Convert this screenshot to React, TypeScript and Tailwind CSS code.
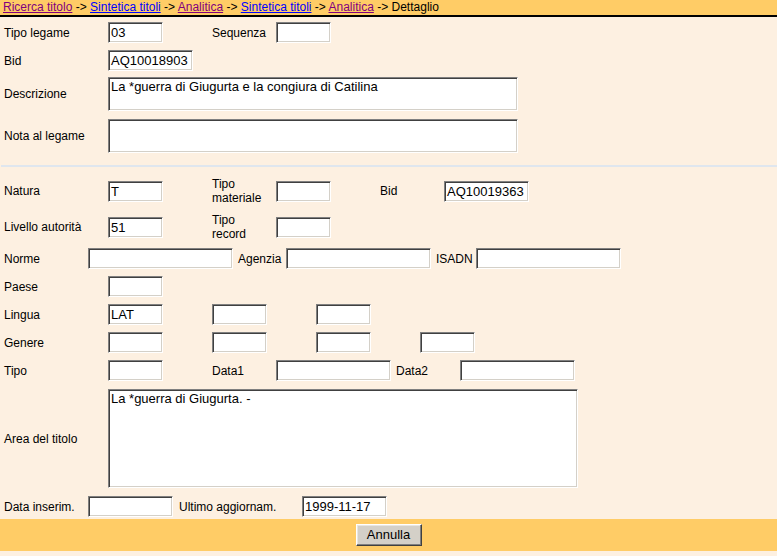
import React from 'react'

const inset =
  'border border-t-[#808080] border-l-[#808080] border-b-white border-r-white shadow-[inset_1px_1px_0_#404040,inset_-1px_-1px_0_#d4d0c8] bg-white'

function Field({ w, value = '' }: { w: string; value?: string }) {
  return (
    <div className={`${inset} ${w} h-[21px] shrink-0 pl-[2px] text-[13px] leading-[19px] text-black`}>
      {value}
    </div>
  )
}

function Area({ w, h, value = '' }: { w: string; h: string; value?: string }) {
  return (
    <div className={`${inset} ${w} ${h} shrink-0 pl-[2px] pt-[1px] text-[13px] leading-[16px] text-black`}>
      {value}
    </div>
  )
}

function Label({ w, children }: { w: string; children: React.ReactNode }) {
  return <div className={`${w} shrink-0 text-[12px] leading-[14px] text-black`}>{children}</div>
}

function Crumb({ children, visited }: { children: React.ReactNode; visited?: boolean }) {
  return (
    <span className={visited ? 'text-[#800080] underline' : 'text-[#0000ff] underline'}>{children}</span>
  )
}

export default function App() {
  return (
    <div
      className="flex h-[556px] w-[777px] flex-col bg-[#fdf0e1]"
      style={{ fontFamily: '"Liberation Sans", Arial, sans-serif' }}
    >
      {/* Breadcrumb */}
      <div className="h-[17px] border-b-2 border-black bg-[#ffcc66] pl-[3px] text-[12px] leading-[15px] text-black">
        <Crumb visited>Ricerca titolo</Crumb> -&gt; <Crumb>Sintetica titoli</Crumb> -&gt;{' '}
        <Crumb visited>Analitica</Crumb> -&gt; <Crumb>Sintetica titoli</Crumb> -&gt;{' '}
        <Crumb visited>Analitica</Crumb> -&gt; Dettaglio
      </div>

      {/* Legame */}
      <div className="flex flex-col pt-[5px]">
        <div className="flex h-[21px] items-center">
          <Label w="w-[108px] pl-[4px]">Tipo legame</Label>
          <Field w="w-[55px]" value="03" />
          <div className="w-[49px] shrink-0" />
          <Label w="w-[64px]">Sequenza</Label>
          <Field w="w-[55px]" />
        </div>
        <div className="mt-[7px] flex h-[21px] items-center">
          <Label w="w-[108px] pl-[4px]">Bid</Label>
          <Field w="w-[85px]" value="AQ10018903" />
        </div>
        <div className="mt-[6px] flex h-[34px] items-center">
          <Label w="w-[108px] pl-[4px]">Descrizione</Label>
          <Area w="w-[410px]" h="h-[34px]" value="La *guerra di Giugurta e la congiura di Catilina" />
        </div>
        <div className="mt-[8px] flex h-[34px] items-center">
          <Label w="w-[108px] pl-[4px]">Nota al legame</Label>
          <Area w="w-[410px]" h="h-[34px]" />
        </div>
      </div>

      <div className="ml-[1px] mt-[12px] h-[2px] bg-[#dfe6ee]" />

      {/* Titolo */}
      <div className="flex flex-col pt-[10px]">
        <div className="flex h-[28px] items-center">
          <Label w="w-[108px] pl-[4px]">Natura</Label>
          <Field w="w-[55px]" value="T" />
          <div className="w-[49px] shrink-0" />
          <Label w="w-[64px]">
            Tipo
            <br />
            materiale
          </Label>
          <Field w="w-[55px]" />
          <div className="w-[49px] shrink-0" />
          <Label w="w-[64px]">Bid</Label>
          <Field w="w-[85px]" value="AQ10019363" />
        </div>
        <div className="mt-[8px] flex h-[28px] items-center">
          <Label w="w-[108px] pl-[4px]">Livello autorità</Label>
          <Field w="w-[55px]" value="51" />
          <div className="w-[49px] shrink-0" />
          <Label w="w-[64px]">
            Tipo
            <br />
            record
          </Label>
          <Field w="w-[55px]" />
        </div>
        <div className="mt-[7px] flex h-[21px] items-center">
          <Label w="w-[88px] pl-[4px]">Norme</Label>
          <Field w="w-[145px]" />
          <Label w="w-[53px] pl-[5px]">Agenzia</Label>
          <Field w="w-[145px]" />
          <Label w="w-[45px] pl-[5px]">ISADN</Label>
          <Field w="w-[145px]" />
        </div>
        <div className="mt-[7px] flex h-[21px] items-center">
          <Label w="w-[108px] pl-[4px]">Paese</Label>
          <Field w="w-[55px]" />
        </div>
        <div className="mt-[7px] flex h-[21px] items-center gap-[49px]">
          <div className="-mr-[49px] flex items-center">
            <Label w="w-[108px] pl-[4px]">Lingua</Label>
          </div>
          <Field w="w-[55px]" value="LAT" />
          <Field w="w-[55px]" />
          <Field w="w-[55px]" />
        </div>
        <div className="mt-[7px] flex h-[21px] items-center gap-[49px]">
          <div className="-mr-[49px] flex items-center">
            <Label w="w-[108px] pl-[4px]">Genere</Label>
          </div>
          <Field w="w-[55px]" />
          <Field w="w-[55px]" />
          <Field w="w-[55px]" />
          <Field w="w-[55px]" />
        </div>
        <div className="mt-[7px] flex h-[21px] items-center">
          <Label w="w-[108px] pl-[4px]">Tipo</Label>
          <Field w="w-[55px]" />
          <div className="w-[49px] shrink-0" />
          <Label w="w-[64px]">Data1</Label>
          <Field w="w-[115px]" />
          <Label w="w-[69px] pl-[5px]">Data2</Label>
          <Field w="w-[115px]" />
        </div>
        <div className="mt-[8px] flex h-[99px] items-center">
          <Label w="w-[108px] pl-[4px]">Area del titolo</Label>
          <Area w="w-[470px]" h="h-[99px]" value="La *guerra di Giugurta. -" />
        </div>
        <div className="mt-[8px] flex h-[21px] items-center">
          <Label w="w-[88px] pl-[4px]">Data inserim.</Label>
          <Field w="w-[85px]" />
          <Label w="w-[129px] pl-[6px]">Ultimo aggiornam.</Label>
          <Field w="w-[85px]" value="1999-11-17" />
        </div>
      </div>

      {/* Bottom bar */}
      <div className="mt-[2px] flex h-[32px] items-center justify-center bg-[#ffcc66]">
        <button className="h-[22px] w-[66px] border border-t-white border-l-white border-b-[#404040] border-r-[#404040] bg-[#d4d0c8] text-[13px] leading-[18px] text-black shadow-[inset_-1px_-1px_0_#808080,inset_1px_1px_0_#e8e6e1]">
          Annulla
        </button>
      </div>
    </div>
  )
}
